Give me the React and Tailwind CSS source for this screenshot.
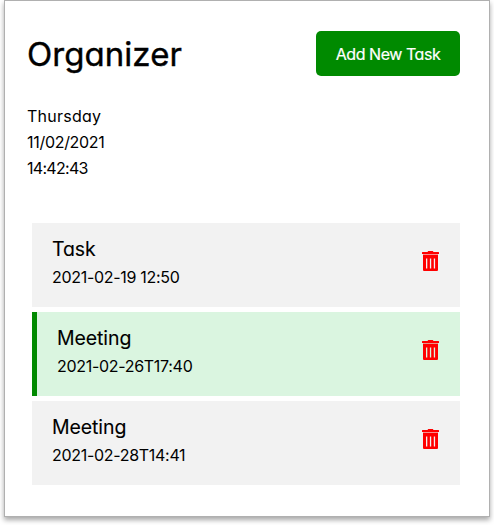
const tasks = [
  { title: "Task", date: "2021-02-19 12:50", reminder: false },
  { title: "Meeting", date: "2021-02-26T17:40", reminder: true },
  { title: "Meeting", date: "2021-02-28T14:41", reminder: false },
];

function TrashIcon({ className }) {
  return (
    <svg className={className} viewBox="0 0 17 20" fill="currentColor" aria-hidden="true">
      <path d="M5.5 1 6.2 0h4.6l.7 1H16.5q.5 0 .5.5V3H0V1.5Q0 1 .5 1z" />
      <path fillOpacity="0.4" d="M1 3h15v1H1z" />
      <path
        fillRule="evenodd"
        d="M1 4h15v15q0 1-1 1H2q-1 0-1-1zM4 7.5v10h1.3v-10zM7.9 7.5v10h1.3v-10zM11.8 7.5v10h1.3v-10z"
      />
    </svg>
  );
}

function Task({ task }) {
  return (
    <div
      className={
        "flex h-[83.5px] items-start justify-between pl-5 pr-[21px] pt-3 " +
        (task.reminder ? "border-l-[5px] border-[#008a00] bg-[#daf5e0]" : "bg-[#f2f2f2]")
      }
    >
      <div>
        <h3 className="h-7 text-[19.5px] leading-7 tracking-[-0.1px] [-webkit-text-stroke:0.1px_black]">{task.title}</h3>
        <p className="h-7 text-base leading-7 tracking-[-0.3px]">{task.date}</p>
      </div>
      <TrashIcon className="mt-4 h-5 w-[17px] text-[#ff0000]" />
    </div>
  );
}

export default function App() {
  return (
    <div className="h-[525px] overflow-hidden bg-white pl-1 font-['Inter',sans-serif] text-black [font-feature-settings:'cv11']">
      <main className="h-[517px] w-[486px] border border-[#b0b0b0] bg-white pl-[22px] pr-[29px] pt-[30px] shadow-[0_3px_5px_rgba(0,0,0,0.35)]">
        <header className="flex h-[45px] items-center justify-between">
          <h1 className="pt-0.5 text-[33px] leading-[45px] tracking-[0.05px] [-webkit-text-stroke:0.4px_black]">Organizer</h1>
          <button className="h-[45px] w-36 rounded-[5px] bg-[#008a00] text-base tracking-[-0.45px] text-white [-webkit-text-stroke:0.2px_white]">
            Add New Task
          </button>
        </header>
        <div className="mt-[27px] h-[78px] text-base leading-[26px]">
          <p className="tracking-[0.25px]">Thursday</p>
          <p className="tracking-[-0.3px]">11/02/2021</p>
          <p className="tracking-[-0.7px]">14:42:43</p>
        </div>
        <div className="ml-[5px] mt-[42px] flex flex-col gap-[5.5px]">
          {tasks.map((task) => (
            <Task key={task.date} task={task} />
          ))}
        </div>
      </main>
    </div>
  );
}
